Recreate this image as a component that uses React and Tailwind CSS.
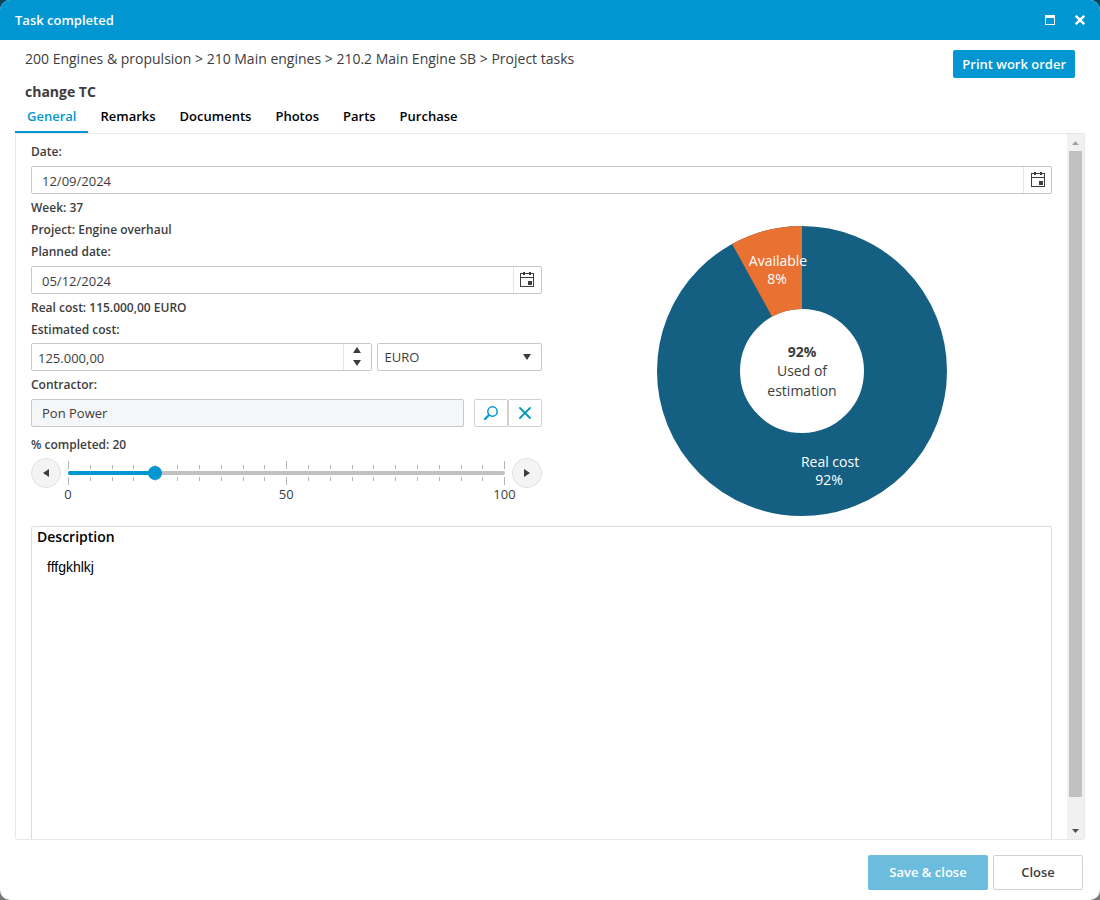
import { useState } from "react";

const tabs = ["General", "Remarks", "Documents", "Photos", "Parts", "Purchase"];
const ticks = Array.from({ length: 21 }, (_, i) => i);

function CalendarIcon() {
  return (
    <svg width="14" height="15" viewBox="0 0 14 15" fill="#3d3d3d" shapeRendering="crispEdges" aria-hidden="true">
      <path d="M0 1h3V0h2v1h4V0h2v1h3v14H0zM1 2v3h12V2h-2v1H9V2H5v1H3V2zM1 6v8h12V6z" fillRule="evenodd" />
      <path d="M8 9h4v4H8z" />
    </svg>
  );
}

function Row({ children, htmlFor }) {
  if (htmlFor) {
    return (
      <label htmlFor={htmlFor} className="block text-[12px] font-semibold leading-[22px]">
        {children}
      </label>
    );
  }
  return <p className="text-[12px] font-semibold leading-[22px]">{children}</p>;
}

function DateField({ id, value }) {
  return (
    <div className="my-[3px] flex h-7 rounded-[2px] border border-[#c8c8c8] bg-white">
      <input id={id} type="text" defaultValue={value} className="min-w-0 flex-1 px-[10px] pt-[3px] text-[13px] outline-none" />
      <button type="button" aria-label="Open calendar" className="flex w-7 items-center justify-center border-l border-[#e4e4e4] pb-px">
        <CalendarIcon />
      </button>
    </div>
  );
}

function TickRow({ className }) {
  return (
    <div className={"-mr-px flex h-2 justify-between " + className}>
      {ticks.map((t) => (
        <span key={t} className={"w-px bg-[#b4b4b4] " + (t % 10 === 0 ? "h-2" : "h-1")} />
      ))}
    </div>
  );
}

function Donut() {
  return (
    <svg width="290" height="290" viewBox="-145 -145 290 290" role="img" aria-label="Used of estimation" className="font-['Open_Sans',sans-serif] text-[14px]">
      <circle r="103.5" fill="none" stroke="#155f82" strokeWidth="83" />
      <path d="M0-145A145 145 0 0 0-69.9-127.1L-29.9-54.3A62 62 0 0 1 0-62Z" fill="#e97132" />
      <g textAnchor="middle" fill="#3d3d3d">
        <text y="-14" fontWeight="700">92%</text>
        <text y="5">Used of</text>
        <text y="25">estimation</text>
      </g>
      <g textAnchor="middle" fill="#ffffff">
        <text x="-24" y="-105">Available</text>
        <text x="-25" y="-87">8%</text>
        <text x="28" y="96">Real cost</text>
        <text x="27" y="114">92%</text>
      </g>
    </svg>
  );
}

export default function App() {
  const [tab, setTab] = useState("General");
  const [done, setDone] = useState(20);

  return (
    <div className="h-screen bg-linear-to-b from-[#0a4259] from-50% to-[#777777] to-50% font-['Open_Sans',sans-serif] text-[#3d3d3d]">
      <div role="dialog" aria-labelledby="dialog-title" className="flex h-full flex-col overflow-hidden rounded-[10px] bg-white">
        <header className="flex h-10 shrink-0 items-center justify-between bg-[#0296d2] pl-[15px] pr-[14px] text-white">
          <h1 id="dialog-title" className="pt-px text-[13px] font-semibold">Task completed</h1>
          <div className="flex gap-[18px]">
            <button type="button" aria-label="Maximize" className="flex size-3 items-center justify-center">
              <svg width="10" height="10" viewBox="0 0 10 10" fill="currentColor" shapeRendering="crispEdges">
                <path d="M0 0h10v10H0zM1 3v6h8V3z" fillRule="evenodd" />
              </svg>
            </button>
            <button type="button" aria-label="Close dialog" className="flex size-3 items-center justify-center">
              <svg width="10" height="10" viewBox="0 0 10 10" fill="none" stroke="currentColor" strokeWidth="2.4">
                <path d="M.8.8l8.4 8.4M9.2.8L.8 9.2" />
              </svg>
            </button>
          </div>
        </header>

        <div className="flex shrink-0 items-start justify-between px-[25px]">
          <div className="flex flex-col gap-[13px] pt-[9px]">
            <p className="text-[14px] leading-5">
              200 Engines &amp; propulsion &gt; 210 Main engines &gt; 210.2 Main Engine SB &gt; Project tasks
            </p>
            <h2 className="text-[14px] font-bold leading-5">change TC</h2>
          </div>
          <button type="button" className="mt-[10px] h-7 rounded-[2px] bg-[#0296d2] px-[9px] pt-px text-[13px] font-semibold text-white">
            Print work order
          </button>
        </div>

        <nav role="tablist" className="mt-px flex shrink-0 px-[15px]">
          {tabs.map((t) => (
            <button
              key={t}
              type="button"
              role="tab"
              aria-selected={t === tab}
              onClick={() => setTab(t)}
              className={
                "h-[30px] border-b-2 px-3 text-[13px] font-semibold " +
                (t === tab ? "border-[#0296d2] text-[#0296d2]" : "border-transparent text-black")
              }
            >
              {t}
            </button>
          ))}
        </nav>

        <main className="mx-[15px] flex min-h-0 flex-1 overflow-hidden rounded-b-[3px] border border-[#e8e8e8]">
          <div className="flex min-w-0 flex-1 flex-col overflow-y-auto px-[15px] pt-[7px] [scrollbar-width:none]">
            <Row htmlFor="date">Date:</Row>
            <DateField id="date" value="12/09/2024" />

            <div className="grid grid-cols-2">
              <div>
                <Row>Week: 37</Row>
                <Row>Project: Engine overhaul</Row>
                <Row htmlFor="planned">Planned date:</Row>
                <DateField id="planned" value="05/12/2024" />
                <Row>Real cost: 115.000,00 EURO</Row>
                <Row htmlFor="estimated">Estimated cost:</Row>
                <div className="mb-[3px] mt-[2px] flex h-7 gap-[5px]">
                  <div className="flex min-w-0 flex-1 rounded-[2px] border border-[#c8c8c8]">
                    <input id="estimated" type="text" defaultValue="125.000,00" className="min-w-0 flex-1 px-[6px] pt-[3px] text-[13px] outline-none" />
                    <div className="flex w-7 flex-col border-l border-[#e4e4e4] pb-px">
                      <button type="button" aria-label="Increase" className="flex flex-1 items-center justify-center">
                        <svg width="8" height="6" viewBox="0 0 8 6" fill="#3d3d3d"><path d="M4 0l4 6H0z" /></svg>
                      </button>
                      <button type="button" aria-label="Decrease" className="flex flex-1 items-center justify-center">
                        <svg width="8" height="6" viewBox="0 0 8 6" fill="#3d3d3d"><path d="M0 0h8L4 6z" /></svg>
                      </button>
                    </div>
                  </div>
                  <div className="relative w-[165px]">
                    <select aria-label="Currency" className="size-full appearance-none rounded-[2px] border border-[#c8c8c8] bg-white pl-[7px] pt-[2px] text-[13px] outline-none">
                      <option>EURO</option>
                      <option>USD</option>
                    </select>
                    <svg className="pointer-events-none absolute right-[11px] top-[11px]" width="8" height="6" viewBox="0 0 8 6" fill="#3d3d3d"><path d="M0 0h8L4 6z" /></svg>
                  </div>
                </div>
                <Row htmlFor="contractor">Contractor:</Row>
                <div className="my-[3px] flex h-7">
                  <input id="contractor" type="text" readOnly value="Pon Power" className="mr-[10px] min-w-0 flex-1 rounded-[2px] border border-[#c8c8c8] bg-[#f5f6f8] px-[10px] pt-px text-[13px] outline-none" />
                  <button type="button" aria-label="Search contractor" className="flex w-[34px] items-center justify-center rounded-[2px] border border-[#d0d0d0]">
                    <svg width="14" height="14" viewBox="0 0 14 14" fill="none" stroke="#0296d2">
                      <circle cx="8.5" cy="5.5" r="4.7" strokeWidth="1.5" />
                      <path d="M5 9L1 13" strokeWidth="2.2" strokeLinecap="round" />
                    </svg>
                  </button>
                  <button type="button" aria-label="Clear contractor" className="flex w-[34px] items-center justify-center rounded-[2px] border border-[#d0d0d0]">
                    <svg width="12" height="12" viewBox="0 0 12 12" fill="none" stroke="#0296b8" strokeWidth="1.8" strokeLinecap="round">
                      <path d="M1 1l10 10M11 1L1 11" />
                    </svg>
                  </button>
                </div>
                <div className="mt-[7px]">
                  <Row htmlFor="completed">% completed: {done}</Row>
                </div>
                <div className="mt-[2px] flex items-start gap-[7px]">
                  <button type="button" aria-label="Less" onClick={() => setDone(Math.max(0, done - 5))} className="flex size-[30px] shrink-0 items-center justify-center rounded-full border border-[#e0e0e0] bg-[#f4f4f4]">
                    <svg width="6" height="8" viewBox="0 0 6 8" fill="#3d3d3d"><path d="M6 0v8L0 4z" /></svg>
                  </button>
                  <div className="min-w-0 flex-1">
                    <div className="relative pb-[2px] pt-[3px]">
                      <TickRow className="items-end" />
                      <div className="my-[2px] h-1 rounded-[2px] bg-[#c1c1c1]">
                        <div className="h-1 rounded-[2px] bg-[#0296d2]" style={{ width: `${done}%` }} />
                      </div>
                      <TickRow className="items-start" />
                      <input
                        id="completed"
                        type="range"
                        min="0"
                        max="100"
                        step="5"
                        value={done}
                        onChange={(e) => setDone(Number(e.target.value))}
                        className="absolute -inset-x-[7px] inset-y-0 h-[30px] appearance-none bg-transparent [&::-webkit-slider-thumb]:size-[14px] [&::-webkit-slider-thumb]:appearance-none [&::-webkit-slider-thumb]:rounded-full [&::-webkit-slider-thumb]:bg-[#0296d2]"
                      />
                    </div>
                    <div className="-mx-5 flex justify-between text-center text-[13px] leading-[14px]">
                      <span className="w-10">0</span>
                      <span className="w-10">50</span>
                      <span className="w-10">100</span>
                    </div>
                  </div>
                  <button type="button" aria-label="More" onClick={() => setDone(Math.min(100, done + 5))} className="flex size-[30px] shrink-0 items-center justify-center rounded-full border border-[#e0e0e0] bg-[#f4f4f4]">
                    <svg width="6" height="8" viewBox="0 0 6 8" fill="#3d3d3d"><path d="M0 0v8l6-4z" /></svg>
                  </button>
                </div>
              </div>
              <div className="flex justify-center pl-[10px] pt-[29px]">
                <Donut />
              </div>
            </div>

            <div className="mt-[10px] flex min-h-[200px] flex-1 flex-col rounded-t-[3px] border border-b-0 border-[#dcdcdc] px-[5px]">
              <label htmlFor="description" className="text-[14px] font-semibold leading-5 text-black">Description</label>
              <textarea
                id="description"
                defaultValue="fffgkhlkj"
                className="flex-1 resize-none px-[10px] pt-3 font-['Liberation_Sans',sans-serif] text-[14px] leading-4 text-black outline-none"
              />
            </div>
          </div>

          <div aria-hidden="true" className="flex w-[17px] shrink-0 flex-col bg-[#f1f1f1]">
            <div className="flex h-[17px] items-center justify-center">
              <svg width="7" height="4" viewBox="0 0 7 4" fill="#a3a3a3"><path d="M0 4h7L3.5 0z" /></svg>
            </div>
            <div className="flex-1 px-[2px]">
              <div className="h-[96.3%] bg-[#c1c1c1]" />
            </div>
            <div className="flex h-[17px] items-center justify-center">
              <svg width="7" height="4" viewBox="0 0 7 4" fill="#505050"><path d="M0 0h7L3.5 4z" /></svg>
            </div>
          </div>
        </main>

        <footer className="flex shrink-0 justify-end gap-[5px] pb-[10px] pl-[15px] pr-[17px] pt-[15px] text-[13px] font-semibold">
          <button type="button" disabled className="h-[35px] w-[120px] rounded-[2px] bg-[#6cbddd] text-white">Save &amp; close</button>
          <button type="button" className="h-[35px] w-[90px] rounded-[2px] border border-[#d0d0d0] bg-white">Close</button>
        </footer>
      </div>
    </div>
  );
}
